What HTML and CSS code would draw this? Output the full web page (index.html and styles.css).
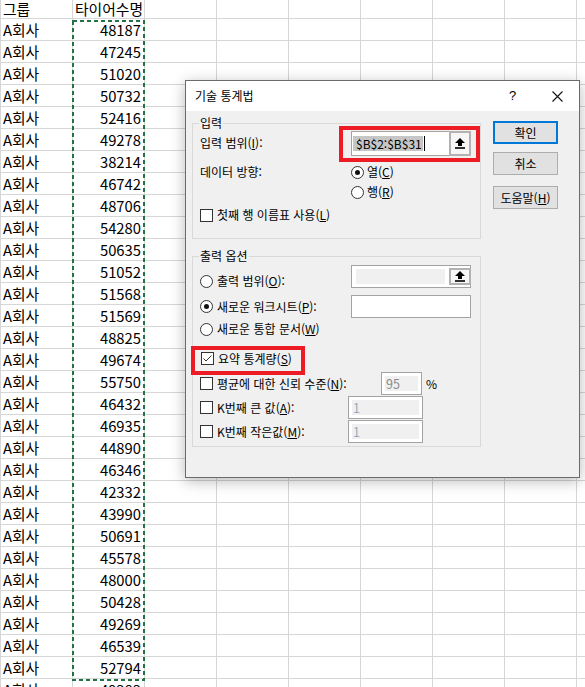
FILE: index.html
```html
<!DOCTYPE html>
<html lang="ko">
<head>
<meta charset="utf-8">
<title>기술 통계법</title>
<link rel="stylesheet" href="styles.css">
</head>
<body>
<div class="sheet">
  <div class="row head"><div class="c ca">그룹</div><div class="c cb-h">타이어수명</div></div>
  <div class="row"><div class="c ca">A회사</div><div class="c cb">48187</div></div>
  <div class="row"><div class="c ca">A회사</div><div class="c cb">47245</div></div>
  <div class="row"><div class="c ca">A회사</div><div class="c cb">51020</div></div>
  <div class="row"><div class="c ca">A회사</div><div class="c cb">50732</div></div>
  <div class="row"><div class="c ca">A회사</div><div class="c cb">52416</div></div>
  <div class="row"><div class="c ca">A회사</div><div class="c cb">49278</div></div>
  <div class="row"><div class="c ca">A회사</div><div class="c cb">38214</div></div>
  <div class="row"><div class="c ca">A회사</div><div class="c cb">46742</div></div>
  <div class="row"><div class="c ca">A회사</div><div class="c cb">48706</div></div>
  <div class="row"><div class="c ca">A회사</div><div class="c cb">54280</div></div>
  <div class="row"><div class="c ca">A회사</div><div class="c cb">50635</div></div>
  <div class="row"><div class="c ca">A회사</div><div class="c cb">51052</div></div>
  <div class="row"><div class="c ca">A회사</div><div class="c cb">51568</div></div>
  <div class="row"><div class="c ca">A회사</div><div class="c cb">51569</div></div>
  <div class="row"><div class="c ca">A회사</div><div class="c cb">48825</div></div>
  <div class="row"><div class="c ca">A회사</div><div class="c cb">49674</div></div>
  <div class="row"><div class="c ca">A회사</div><div class="c cb">55750</div></div>
  <div class="row"><div class="c ca">A회사</div><div class="c cb">46432</div></div>
  <div class="row"><div class="c ca">A회사</div><div class="c cb">46935</div></div>
  <div class="row"><div class="c ca">A회사</div><div class="c cb">44890</div></div>
  <div class="row"><div class="c ca">A회사</div><div class="c cb">46346</div></div>
  <div class="row"><div class="c ca">A회사</div><div class="c cb">42332</div></div>
  <div class="row"><div class="c ca">A회사</div><div class="c cb">43990</div></div>
  <div class="row"><div class="c ca">A회사</div><div class="c cb">50691</div></div>
  <div class="row"><div class="c ca">A회사</div><div class="c cb">45578</div></div>
  <div class="row"><div class="c ca">A회사</div><div class="c cb">48000</div></div>
  <div class="row"><div class="c ca">A회사</div><div class="c cb">50428</div></div>
  <div class="row"><div class="c ca">A회사</div><div class="c cb">49269</div></div>
  <div class="row"><div class="c ca">A회사</div><div class="c cb">46539</div></div>
  <div class="row"><div class="c ca">A회사</div><div class="c cb">52794</div></div>
  <div class="row"><div class="c ca">A회사</div><div class="c cb">49383</div></div>
</div>

<svg class="ants" width="585" height="687" viewBox="0 0 585 687">
  <rect x="73" y="21" width="71" height="659" fill="none" stroke="#217346" stroke-width="2" stroke-dasharray="4 3"/>
</svg>

<div class="dialog">
  <div class="titlebar">
    <span class="title">기술 통계법</span>
    <span class="tb-btn help">?</span>
    <span class="tb-btn close">
      <svg width="11" height="11" viewBox="0 0 11 11"><path d="M0.5 0.5L10.5 10.5M10.5 0.5L0.5 10.5" stroke="#111" stroke-width="1.1" fill="none"/></svg>
    </span>
  </div>
  <div class="dbody">
    <div class="left">
      <div class="group g1">
        <div class="gtitle">입력</div>
        <div class="r-range">
          <span class="lbl lbl-range">입력 범위(<u>I</u>):</span>
          <div class="mark mark-range">
            <div class="field field-range">
              <span class="val"><span class="sel">$B$2:$B$31</span><span class="caret"></span></span>
              <span class="pick">
                <svg width="10" height="11" viewBox="0 0 10 11"><path d="M5 0L10 5H7V8H3V5H0Z" fill="#000"/><rect x="0" y="9.2" width="10" height="1.6" fill="#000"/></svg>
              </span>
            </div>
          </div>
        </div>
        <div class="r-dir">
          <span class="lbl lbl-dir">데이터 방향:</span>
          <div class="opts">
            <div class="opt"><span class="radio on"></span><span>열(<u>C</u>)</span></div>
            <div class="opt"><span class="radio"></span><span>행(<u>R</u>)</span></div>
          </div>
        </div>
        <div class="opt r-first"><span class="chk"></span><span>첫째 행 이름표 사용(<u>L</u>)</span></div>
      </div>

      <div class="group g2">
        <div class="gtitle">출력 옵션</div>
        <div class="r-out">
          <div class="opt lbl-out"><span class="radio"></span><span>출력 범위(<u>O</u>):</span></div>
          <div class="field field-out">
            <span class="dis-inner"></span>
            <span class="pick">
              <svg width="10" height="11" viewBox="0 0 10 11"><path d="M5 0L10 5H7V8H3V5H0Z" fill="#000"/><rect x="0" y="9.2" width="10" height="1.6" fill="#000"/></svg>
            </span>
          </div>
        </div>
        <div class="r-ws">
          <div class="opt lbl-out"><span class="radio on"></span><span>새로운 워크시트(<u>P</u>):</span></div>
          <div class="field field-ws"></div>
        </div>
        <div class="opt r-wb"><span class="radio"></span><span>새로운 통합 문서(<u>W</u>)</span></div>
        <div class="mark mark-sum">
          <span class="chk on"><svg width="11" height="11" viewBox="0 0 11 11"><path d="M1.5 5.5L4 8L9.5 2.5" stroke="#333" stroke-width="1" fill="none"/></svg></span>
          <span>요약 통계량(<u>S</u>)</span>
        </div>
        <div class="r-conf">
          <div class="opt lbl-conf"><span class="chk"></span><span>평균에 대한 신뢰 수준(<u>N</u>):</span></div>
          <div class="field dis field-conf"><span class="dis-text">95</span></div>
          <span class="pct">%</span>
        </div>
        <div class="r-k">
          <div class="opt lbl-k"><span class="chk"></span><span>K번째 큰 값(<u>A</u>):</span></div>
          <div class="field dis field-k"><span class="dis-text one">1</span></div>
        </div>
        <div class="r-k r-k2">
          <div class="opt lbl-k"><span class="chk"></span><span>K번째 작은값(<u>M</u>):</span></div>
          <div class="field dis field-k"><span class="dis-text one">1</span></div>
        </div>
      </div>
    </div>

    <div class="buttons">
      <div class="btn default">확인</div>
      <div class="btn b-cancel">취소</div>
      <div class="btn b-help">도움말(<u>H</u>)</div>
    </div>
  </div>
</div>
</body>
</html>
```

FILE: styles.css
```css
html, body {
  margin: 0;
  padding: 0;
}
body {
  width: 585px;
  height: 687px;
  overflow: hidden;
  position: relative;
  background: #ffffff;
  font-family: "Noto Sans CJK KR", "Noto Sans", sans-serif;
  color: #000;
}

/* ---------- spreadsheet ---------- */
.sheet {
  width: 585px;
  height: 687px;
  overflow: hidden;
  background-image:
    linear-gradient(to right, #d6d6d6 0 1px, transparent 1px),
    linear-gradient(to bottom, #d6d6d6 0 1px, transparent 1px);
  background-size: 72px 100%, 100% 22px;
  background-position: 0 0, 0 18px;
  font-size: 14.8px;
}
.row {
  display: flex;
  height: 22px;
}
.row.head {
  height: 19px;
  align-items: flex-start;
}
.c {
  width: 72px;
  height: 21px;
  line-height: 21px;
  box-sizing: border-box;
  white-space: nowrap;
}
.head .c {
  height: 19px;
  line-height: 19px;
  margin-top: -1px;
}
.ca {
  padding-left: 3px;
}
.cb {
  text-align: right;
  padding-right: 3px;
}
.cb-h {
  padding-left: 3px;
  width: 110px;
}

.ants {
  position: absolute;
  left: 0;
  top: 0;
  pointer-events: none;
}

/* ---------- dialog ---------- */
.dialog {
  position: absolute;
  left: 185px;
  top: 80px;
  width: 395px;
  height: 398px;
  box-sizing: border-box;
  border: 1px solid #6b6b6b;
  background: #f0f0f0;
  box-shadow: 0 3px 14px rgba(0, 0, 0, 0.28);
  font-size: 12px;
  line-height: 16px;
  display: flex;
  flex-direction: column;
}
.titlebar {
  height: 30px;
  background: #ffffff;
  display: flex;
  align-items: center;
  flex: none;
}
.title {
  flex: 1;
  padding-left: 9px;
  font-size: 12px;
}
.tb-btn {
  display: flex;
  align-items: center;
  justify-content: center;
  height: 30px;
}
.help {
  width: 45px;
  font-family: "Liberation Sans", "DejaVu Sans", sans-serif;
  font-size: 13px;
}
.close {
  width: 44px;
}

.dbody {
  flex: 1;
  display: flex;
  padding: 12px 0 0 6px;
}
.left {
  width: 289px;
  flex: none;
}
.group {
  box-sizing: border-box;
  width: 289px;
  border: 1px solid #d9d9d9;
  padding: 0 0 0 7px;
}
.gtitle {
  width: max-content;
  background: #f0f0f0;
  padding: 0 1px;
  margin: -9px 0 -5px -1px;
  height: 16px;
}
.g1 {
  padding-bottom: 10px;
}
.g2 {
  margin-top: 17px;
  padding-bottom: 3px;
}
.g2 .gtitle {
  margin-bottom: 1px;
}

.lbl {
  flex: none;
}
u {
  text-decoration: underline;
  text-underline-offset: 1px;
}

.r-range {
  display: flex;
  align-items: center;
  height: 36px;
}
.lbl-range {
  width: 139px;
  padding-bottom: 3px;
}
.mark {
  box-sizing: border-box;
  border: 4px solid #ed1c24;
}
.mark-range {
  width: 141px;
  height: 36px;
  padding: 1px 5px 2px 8px;
}
.field {
  box-sizing: border-box;
  border: 1px solid #a3a3a3;
  background: #ffffff;
  display: flex;
}
.field-range {
  width: 120px;
  height: 25px;
}
.val {
  flex: 1;
  display: flex;
  align-items: center;
  padding-left: 1px;
}
.sel {
  background: #c6c6c6;
  padding: 0 1px 0 3px;
  line-height: 15px;
  height: 15px;
  color: #000;
}
.caret {
  width: 1px;
  height: 15px;
  background: #000;
  margin-left: 1px;
}
.pick {
  box-sizing: border-box;
  width: 22px;
  margin: -1px -1px -1px 0;
  border: 2px solid #b2b2b2;
  background: #f6f6f6;
  display: flex;
  align-items: center;
  justify-content: center;
}

.r-dir {
  display: flex;
}
.lbl-dir {
  width: 151px;
  height: 20px;
  line-height: 20px;
}
.opts {
  display: flex;
  flex-direction: column;
}
.opt {
  display: flex;
  align-items: center;
  height: 20px;
  white-space: nowrap;
}
.radio {
  box-sizing: border-box;
  width: 13px;
  height: 13px;
  border: 1px solid #333;
  border-radius: 50%;
  background: #fff;
  margin-right: 3px;
  flex: none;
  display: flex;
  align-items: center;
  justify-content: center;
}
.radio.on::after {
  content: "";
  width: 5px;
  height: 5px;
  border-radius: 50%;
  background: #111;
}
.chk {
  box-sizing: border-box;
  width: 13px;
  height: 13px;
  border: 1px solid #333;
  background: #fff;
  margin-right: 4px;
  flex: none;
  display: flex;
  align-items: center;
  justify-content: center;
}
.r-first {
  height: 26px;
}

.r-out {
  display: flex;
  align-items: flex-start;
}
.lbl-out {
  width: 151px;
  height: 16px;
  margin-top: 8px;
}
.r-out .radio, .r-ws .radio, .r-wb .radio {
  margin-right: 4px;
}
.field-out {
  width: 120px;
  height: 23px;
  padding: 3px 0 3px 4px;
}
.dis-inner {
  flex: 1;
  background: #f0f0f0;
  margin-right: 4px;
}
.r-ws {
  display: flex;
  align-items: center;
  margin-top: 6px;
  height: 23px;
}
.r-ws .lbl-out {
  margin-top: 0;
}
.field-ws {
  width: 120px;
  height: 23px;
}
.r-wb {
  margin-top: 1px;
}
.mark-sum {
  margin-top: 7px;
  margin-left: -9px;
  width: 114px;
  height: 29px;
  display: flex;
  align-items: center;
  padding: 0 0 4px 6px;
  white-space: nowrap;
}
.r-conf {
  display: flex;
  align-items: center;
  margin-top: -3px;
  height: 23px;
}
.lbl-conf {
  width: 181px;
}
.field.dis {
  padding: 3px;
  height: 23px;
}
.dis-text {
  flex: 1;
  background: #f0f0f0;
  color: #8a8a8a;
  line-height: 15px;
  padding-left: 1px;
  font-size: 12.5px;
}
.dis-text.one {
  color: #9aa8ba;
}
.field-conf {
  width: 41px;
}
.pct {
  margin-left: 4px;
}
.r-k {
  display: flex;
  align-items: center;
  margin-top: 1px;
  height: 23px;
}
.lbl-k {
  width: 148px;
}
.field-k {
  width: 75px;
}

.buttons {
  margin-left: 12px;
  margin-top: -2px;
  display: flex;
  flex-direction: column;
}
.btn {
  box-sizing: border-box;
  width: 65px;
  height: 23px;
  border: 1px solid #adadad;
  background: #e1e1e1;
  display: flex;
  align-items: center;
  justify-content: center;
}
.btn.default {
  border: 2px solid #0078d7;
}
.b-cancel {
  margin-top: 8px;
}
.b-help {
  margin-top: 11px;
}
```
